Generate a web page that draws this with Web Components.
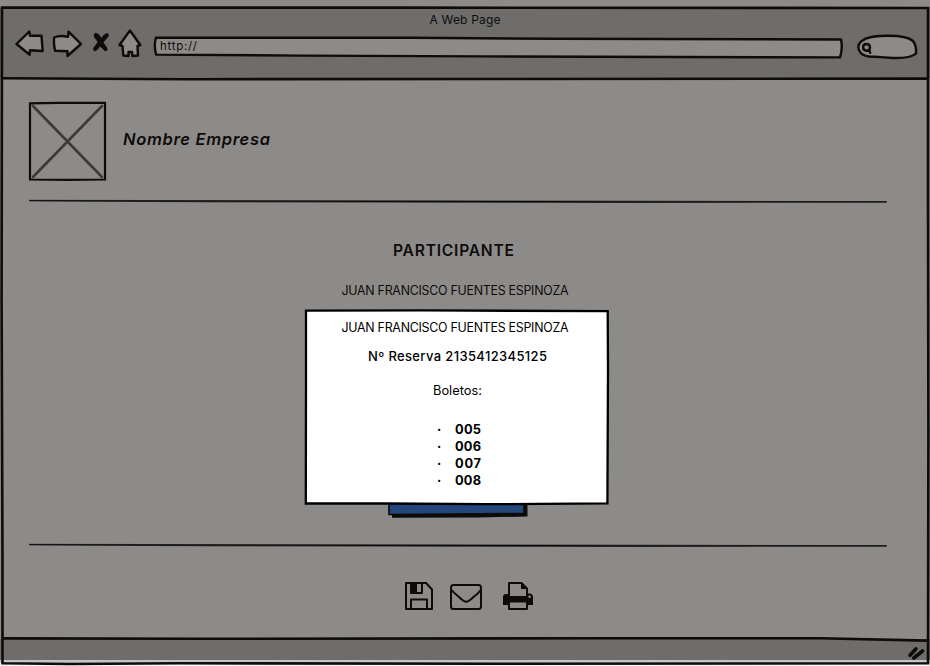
<!DOCTYPE html>
<html lang="es">
<head>
<meta charset="utf-8">
<title>A Web Page</title>
<style>
html,body{margin:0;height:100%;overflow:hidden}
body{background:#8d8b89;color:#0d0c0b;font-family:Inter,"Open Sans",sans-serif}
</style>
</head>
<body>
<browser-window heading="A Web Page" url="http://">
  <brand-header name="Nombre Empresa"></brand-header>
  <sketch-rule></sketch-rule>
  <participant-card heading="PARTICIPANTE" name="JUAN FRANCISCO FUENTES ESPINOZA"></participant-card>
  <sketch-rule></sketch-rule>
  <action-icons></action-icons>
  <ticket-dialog slot="dialog" name="JUAN FRANCISCO FUENTES ESPINOZA" tickets="005,006,007,008"></ticket-dialog>
</browser-window>
<script>
const define = (tag, render, after) => customElements.define(tag, class extends HTMLElement {
  connectedCallback() {
    if (this.shadowRoot) return;
    this.attachShadow({mode: 'open'}).innerHTML = render(this);
    if (after) after(this);
  }
});

/* A single line of lettering, tracked out to fill its width. */
define('fit-text', () => `<style>
  :host{display:block;white-space:nowrap;width:var(--w)}
  span{display:inline-block;white-space:nowrap}
</style><span><slot></slot></span>`, el => {
  const w = +el.getAttribute('w');
  el.style.setProperty('--w', w + 'px');
  const span = el.shadowRoot.querySelector('span');
  const n = el.textContent.length;
  span.style.letterSpacing = ((w - span.getBoundingClientRect().width) / (n - 1)) + 'px';
});

define('sketch-icon', el => {
  const art = {
    back: [30,30,'<path d="M1.5 15L14.3 2.5L15 6.8L26.5 6.8L27.7 22L15 21.3L14.7 25.7Z"/>'],
    forward: [30,30,'<path d="M1 8.5Q7 6 15 7.8L15.5 2.7L28 15L14.5 27L14.5 22.2L2 21.8Q0.5 15 1 8.5Z"/>'],
    stop: [18,22,'<path d="M3 1Q1 4 3 6L6 10L1.5 16Q1 19 3 19Q6 18 8 14L13 19Q16 19 15 16L11.2 10.5L16.5 4Q17 1 14.5 1.5Q11 3 9.5 6.5Q7 1 3 1Z" fill="#0d0c0b" stroke="#0d0c0b" stroke-width=".6"/>'],
    home: [26,30,'<path d="M12 1.5L22.3 16L19.5 17L20 26.5L14.5 27L14 23H10.5L10.5 27L5.3 26.5L4.5 17L1.5 16Z"/>']
  }[el.getAttribute('kind')];
  return `<style>:host{display:block}svg{display:block;overflow:visible;fill:#8d8b89;stroke:#0d0c0b;stroke-width:2.4;stroke-linejoin:round}</style>
  <svg width="${art[0]}" height="${art[1]}">${art[2]}</svg>`;
});

define('browser-toolbar', el => `<style>
  :host{display:flex;height:38px;padding-left:15px;align-items:flex-start}
  sketch-icon[kind=back]{margin-right:8px}
  sketch-icon[kind=forward]{margin-right:9px}
  sketch-icon[kind=stop]{margin:3px 8px 0 0}
  sketch-icon[kind=home]{margin-right:9px}
  .url,.search{position:relative;flex:none}
  .url{width:692px;height:30px}
  .url fit-text{padding:9px 0 0 7px;font-size:11.5px;line-height:16px;position:relative}
  .search{width:62px;height:30px;margin-left:12px}
  svg{position:absolute;inset:0;overflow:visible;fill:#8d8b89;stroke:#0d0c0b;stroke-width:2.4}
</style>
<sketch-icon kind="back"></sketch-icon><sketch-icon kind="forward"></sketch-icon>
<sketch-icon kind="stop"></sketch-icon><sketch-icon kind="home"></sketch-icon>
<div class="url"><svg width="692" height="30"><path d="M3 8.6L260 8.8L400 9.8L688 10.5Q690 19 687 28.4L330 27.4L150 26.6L3.2 25.6Q0.5 17 3 8.6Z"/></svg><fit-text w="37">${el.getAttribute('url')}</fit-text></div>
<div class="search"><svg width="62" height="30"><path d="M12.5 27.5C4 27 1 21.5 1.3 17.5C2.5 10.5 12 7 29 6.8C44 6.5 52 8.5 56 12C59 16 59.5 20 59 24.5C55 28.5 46 29.2 36 29C25 28.5 21 27.5 12.5 27.5Z"/><path d="M9.4 15C14.5 15.2 13.8 21.8 9.6 21.8C4.9 21.3 5.1 15.2 9.4 15M10.2 21.3L12.6 21.8L13.4 24.8"/></svg></div>`);

define('browser-window', el => `<style>
  :host{display:flex;flex-direction:column;position:relative;width:930px;height:666px;background:#8d8b89}
  header{box-sizing:border-box;height:78px;padding-top:8px;background:linear-gradient(#8d8b89 8px,#6e6d6b 8px)}
  .title{margin-left:429.5px;font-size:12px;line-height:20px;padding-top:2px;margin-bottom:-1px}
  main{display:flex;flex-direction:column;height:561px}
  footer{height:21px;background:#6e6d6b}
  .edge{flex:1;background:linear-gradient(#c3c6c5 3px,#f5f5f5 3px)}
  .ink{position:absolute;inset:0;pointer-events:none;fill:none;stroke:#0d0c0b;stroke-width:2.6}
  ::slotted([slot=dialog]){position:absolute;left:304px;top:309px}
</style>
<header><fit-text class="title" w="71">${el.getAttribute('heading')}</fit-text><browser-toolbar url="${el.getAttribute('url')}"></browser-toolbar></header>
<main><slot></slot></main><footer></footer><div class="edge"></div>
<svg class="ink" width="930" height="666">
 <path d="M2 7.6L400 7.6L928 8L928 200L928.4 430L928 663.3L500 663.8L180 663.2L70 664L2.5 663.3L2.5 560L1.6 300Z"/>
 <path d="M2 78.3L190 79.2L500 79L928 78.6M2.5 638.4L200 638.8L600 638.2L820 638.2L928 640.6"/>
 <path d="M910 655.2L916 648.8M913.8 658L922.5 651" stroke-width="3.6" stroke-linecap="round"/>
</svg><slot name="dialog"></slot>`);

define('brand-header', el => `<style>
  :host{display:flex;height:80px;padding:23px 0 0 28px;gap:16px}
  svg{display:block}
  fit-text{font-style:italic;font-weight:600;font-size:16.5px;line-height:24px;padding-top:26px}
</style><svg width="79" height="80" fill="none"><path d="M5 5L74 76M74 5L5 76" stroke="#3b3a39" stroke-width="2.6" stroke-linecap="round"/><path d="M2 2.3L30 1.8H77V78.5L40 78.8L2 78.5Z" stroke="#0d0c0b" stroke-width="2.2"/></svg>
<fit-text w="147">${el.getAttribute('name')}</fit-text>`);

define('sketch-rule', () => `<style>:host{display:block;height:4px;margin:0 43px 0 29px}:host(:first-of-type){margin-top:18px}svg{display:block}</style>
<svg width="858" height="4"><path d="M0.5 1.3L857.5 2.6V3.2L600 3.4L180 2.8L0.5 1.9Z" fill="#0d0c0b" stroke="#0d0c0b" stroke-width=".7"/></svg>`);

define('participant-card', el => `<style>
  :host{display:flex;flex-direction:column;align-items:flex-start;height:340px}
  .h{font-weight:600;font-size:15.6px;line-height:24px;margin:36px 0 0 393px}
  .n{font-size:12.4px;line-height:20px;margin:18px 0 0 341.5px}
  .button{margin:200px 0 0 388px}
  svg{display:block}
</style><fit-text class="h" w="121">${el.getAttribute('heading')}</fit-text>
<fit-text class="n" w="227">${el.getAttribute('name')}</fit-text>
<svg class="button" width="140" height="18"><path d="M4 3H139.5V15.5L90 16.5L4 16.7Z" fill="#0d0c0b"/><path d="M1 0V13.5L136 12.5V0Z" fill="#23467b" stroke="#0d0c0b" stroke-width="1.7"/></svg>`);

define('action-icons', () => `<style>
  :host{display:flex;padding:34px 0 0 404px;gap:16px;align-items:flex-start}
  svg{display:block;fill:none;stroke:#0d0c0b;stroke-width:2;stroke-linejoin:round}
</style>
<svg width="30" height="30"><path d="M2 2H22L28 8.5V28H2Z"/><path d="M7 2V12H18V2M7 28V18.5H23V28"/><path d="M7 2H12V12H7Z" fill="#0d0c0b"/></svg>
<svg width="33" height="30"><rect x="1" y="4" width="30" height="24" rx="2.5"/><path d="M1 8.5C3 11 6 13.5 9 16Q14 20.8 16.2 20.8Q18.5 20.8 23.5 16C27 13.5 29.5 11 31 8.5"/></svg>
<svg width="32" height="30" style="margin-left:3px"><path d="M7 15V2H19.5L25 7.5V15M7 20V28H25V20"/><path d="M19 1.5L26 8H19Z" fill="#0d0c0b" stroke="none"/><path d="M1 16Q1 13 4 13H6V15H26V12.5H28Q31 13 31 16V24H26V21.5H6V24H1Z" fill="#0d0c0b" stroke="none"/><circle cx="27.6" cy="15.8" r="1.3" fill="#8d8b89" stroke="none"/></svg>`);

define('ticket-dialog', el => `<style>
  :host{display:flex;flex-direction:column;align-items:flex-start;width:306px;height:197px;color:#000}
  .paper{position:absolute;inset:0}
  fit-text,ul{position:relative}
  .n{font-size:12.4px;line-height:20px;margin:9px 0 0 37.5px}
  .r{font-size:13px;font-weight:500;line-height:20px;margin:8px 0 0 64px}
  .b{font-size:12.8px;line-height:20px;margin:15px 0 0 129px}
  ul{list-style:none;margin:20px 0 0 133px;padding:0}
  li{display:flex;gap:15px;height:17px;line-height:17px;font-size:12.8px;font-weight:700}
  li span{width:3px}
</style>
<svg class="paper" width="306" height="197"><path d="M2 1.7L120 1.4L303.7 2.2L304 60L303.4 194.4L180 195.2L80 194.5L1.8 194.5L2 70Z" fill="#fff" stroke="#000" stroke-width="2.3"/></svg>
<fit-text class="n" w="227">${el.getAttribute('name')}</fit-text>
<fit-text class="r" w="179">Nº Reserva 2135412345125</fit-text>
<fit-text class="b" w="49">Boletos:</fit-text>
<ul>${el.getAttribute('tickets').split(',').map(t => `<li><span>·</span><fit-text w="26">${t}</fit-text></li>`).join('')}</ul>`);
</script>
</body>
</html>
